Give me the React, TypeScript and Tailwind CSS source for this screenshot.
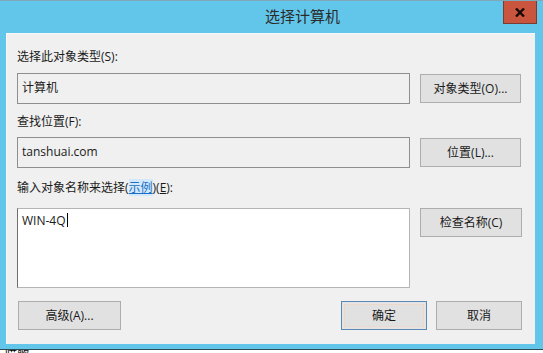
import React from 'react';

// Windows Server 2012 "选择计算机" picker dialog.
const font = "font-['Open_Sans','Noto_Sans_CJK_SC',sans-serif]";

const Button: React.FC<{ label: React.ReactNode; w: string; isDefault?: boolean; className?: string }> = ({
  label,
  w,
  isDefault,
  className = '',
}) => (
  <div
    className={`flex h-[29px] ${w} shrink-0 items-center justify-center border bg-[#e1e1e1] text-[12px] text-[#1a1a1a] ${
      isDefault ? 'border-[#5a87b4] shadow-[inset_0_0_0_2px_#e4e4e4,inset_0_0_0_3px_#ecd9cb]' : 'border-[#adadad]'
    } ${className}`}
  >
    {label}
  </div>
);

const ReadOnlyBox: React.FC<{ value: string }> = ({ value }) => (
  <div className="h-[31px] w-[393px] shrink-0 border border-[#8f8f8f] bg-[#f0f0f0] px-[4px] pt-[5px] text-[12px] leading-[18px] text-[#1a1a1a]">
    {value}
  </div>
);

export default function App() {
  return (
    <div className={`h-[353px] w-[543px] overflow-hidden bg-white ${font}`}>
      {/* window frame */}
      <div className="flex h-[349px] flex-col border-t border-[#7fa8bb] bg-[#62c6ea]">
        {/* title bar */}
        <div className="flex h-[32px] shrink-0 items-start">
          <div className="w-[102px]" />
          <div className="flex-1 pt-[4px] text-center text-[15px] leading-[22px] text-[#2b2b2b]">选择计算机</div>
          <div className="mr-[6px] flex h-[23px] w-[34px] items-center justify-center border border-[#7a3b31] border-t-0 bg-[#c9553f]">
            <svg width="10" height="9" viewBox="0 0 10 9">
              <path d="M1 0.5 L9 8.5 M9 0.5 L1 8.5" stroke="#1a0a06" strokeWidth="2.4" />
            </svg>
          </div>
        </div>

        {/* client area */}
        <div className="mx-[6px] mr-[8px] flex h-[311px] flex-col border-l border-t border-[#f8f8f8] bg-[#f0f0f0] pl-[10px] pr-[13px] pt-[15px] text-[12px] leading-[16px] text-[#1a1a1a]">
          <div>选择此对象类型(S):</div>
          <div className="mt-[8px] flex items-start gap-[10px]">
            <ReadOnlyBox value="计算机" />
            <Button label="对象类型(O)..." w="w-[101px]" className="mt-[1px]" />
          </div>

          <div className="mt-[10px]">查找位置(F):</div>
          <div className="mt-[7px] flex items-start gap-[10px]">
            <ReadOnlyBox value="tanshuai.com" />
            <Button label="位置(L)..." w="w-[101px]" className="mt-[1px]" />
          </div>

          <div className="mt-[12px]">
            输入对象名称来选择(
            <span className="bg-[#d3e9fb] text-[#1a6fc4] underline">示例</span>)(<span className="underline">E</span>):
          </div>
          <div className="mt-[12px] flex items-start gap-[10px]">
            <div className="h-[80px] w-[393px] shrink-0 border border-[#b5b5b5] border-l-[#6f6f6f] bg-white px-[4px] pt-[2px] leading-[16px]">
              WIN-4Q<span className="ml-[1px] inline-block h-[14px] w-px translate-y-[2px] bg-black" />
            </div>
            <Button label="检查名称(C)" w="w-[102px]" />
          </div>

          <div className="mt-[13px] flex items-start">
            <Button label="高级(A)..." w="w-[103px]" className="ml-[1px]" />
            <div className="flex-1" />
            <Button label="确定" w="w-[86px]" isDefault />
            <Button label="取消" w="w-[86px]" className="ml-[9px]" />
          </div>
        </div>
        <div className="h-[4px]" />
      </div>
      <div className="h-px bg-[#2d4a57]" />
      {/* behind the dialog: cut-off taskbar text */}
      <div className="h-[3px] overflow-hidden pl-[5px]">
        <div className="-mt-[2px] text-[12px] leading-[14px] text-black">喵歌</div>
      </div>
    </div>
  );
}
